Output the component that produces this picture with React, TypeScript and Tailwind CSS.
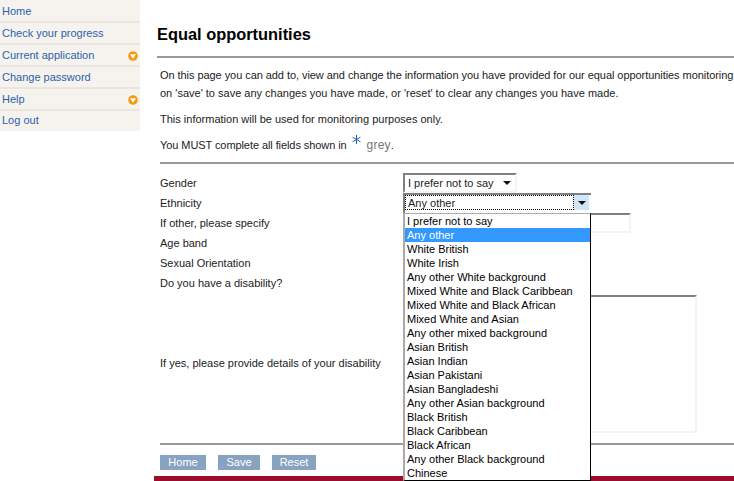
const navItems = [
  { label: "Home" },
  { label: "Check your progress" },
  { label: "Current application", arrow: true },
  { label: "Change password" },
  { label: "Help", arrow: true },
  { label: "Log out" },
];

const ethnicities = [
  "I prefer not to say",
  "Any other",
  "White British",
  "White Irish",
  "Any other White background",
  "Mixed White and Black Caribbean",
  "Mixed White and Black African",
  "Mixed White and Asian",
  "Any other mixed background",
  "Asian British",
  "Asian Indian",
  "Asian Pakistani",
  "Asian Bangladeshi",
  "Any other Asian background",
  "Black British",
  "Black Caribbean",
  "Black African",
  "Any other Black background",
  "Chinese",
];

const fieldBox = "border-2 border-t-[#808080] border-l-[#808080] border-r-[#f4f4f4] border-b-[#f4f4f4]";

function NavArrow() {
  return (
    <svg width="10" height="10" viewBox="0 0 10 10" className="shrink-0">
      <circle cx="5" cy="5" r="4.8" fill="#f59a12" />
      <path d="M2 3.2h6L5 7.8z" fill="#fff" />
    </svg>
  );
}

function Row({ label, children }: { label: string; children?: React.ReactNode }) {
  return (
    <div className="flex items-center h-5">
      <div className="w-[243px] shrink-0">{label}</div>
      {children}
    </div>
  );
}

export default function App() {
  return (
    <div className="relative flex h-[481px] w-[734px] overflow-hidden bg-white text-[11px] text-[#222] font-['Liberation_Sans',Arial,sans-serif]">
      {/* sidebar */}
      <nav className="w-[140px] shrink-0 self-start bg-[#f6f2ee] pt-px">
        {navItems.map((item, i) => (
          <div
            key={item.label}
            className={`flex items-center justify-between pl-0.5 pr-[2px] text-[#2a62ad] ${i < navItems.length - 1 ? "h-[22px] border-b-2 border-[#e9e5e1] pt-px" : "h-[20px] pb-[2px]"}`}
          >
            <span>{item.label}</span>
            {item.arrow && <NavArrow />}
          </div>
        ))}
      </nav>

      {/* main */}
      <main className="relative ml-[14px] flex min-w-0 flex-1 flex-col">
        <h1 className="ml-[3px] mt-[24px] h-[20px] text-[16.4px] leading-[20px] font-bold text-black whitespace-nowrap">
          Equal opportunities
        </h1>
        <div className="ml-[3px] mt-[12px] h-0.5 bg-[#999]" />

        <div className="ml-[6px] mt-[8px] whitespace-nowrap">
          <p className="leading-[18px] tracking-[-0.06px]">On this page you can add to, view and change the information you have provided for our equal opportunities monitoring</p>
          <p className="leading-[18px]">on 'save' to save any changes you have made, or 'reset' to clear any changes you have made.</p>
          <p className="mt-2 leading-[18px]">This information will be used for monitoring purposes only.</p>
          <p className="mt-2 flex h-[18px] items-center tracking-[-0.08px]">
            You MUST complete all fields shown in
            <svg width="9" height="9" viewBox="0 0 9 9" className="ml-[5px] mb-[12px]">
              <path d="M4.5 0v9M0.6 2.2l7.8 4.6M8.4 2.2L0.6 6.8" stroke="#1a5fb4" strokeWidth="1" fill="none" />
            </svg>
            <span className="ml-[6px] text-[12px] tracking-[0.2px] text-[#777]">grey</span>.
          </p>
        </div>
        <div className="ml-[6px] mt-[8px] h-0.5 bg-[#999]" />

        <div className="ml-[6px] mt-[9px] whitespace-nowrap">
          <Row label="Gender">
            <div className={`flex h-[20px] w-[114px] items-center justify-between pl-[3px] pr-[4px] ${fieldBox}`}>
              <span>I prefer not to say</span>
              <svg width="8" height="4" viewBox="0 0 8 4"><path d="M0 0h8L4 4z" fill="#111" /></svg>
            </div>
          </Row>
          <Row label="Ethnicity" />
          <Row label="If other, please specify">
            <div className={`h-[20px] w-[228px] ${fieldBox}`} />
          </Row>
          <Row label="Age band" />
          <Row label="Sexual Orientation" />
          <Row label="Do you have a disability?" />
          <div className="mt-[2px] flex h-[138px] items-center">
            <div className="mb-[2px] w-[243px] shrink-0">If yes, please provide details of your disability</div>
            <div className={`h-full w-[294px] ${fieldBox}`} />
          </div>
        </div>

        <div className="ml-[6px] mt-[10px] h-0.5 bg-[#999]" />
        <div className="ml-[6px] mt-[10px] flex gap-3">
          {["Home", "Save", "Reset"].map((b) => (
            <button key={b} className="flex h-[15px] w-[46px] items-center justify-center bg-[#87a3c1] text-[11px] text-white [&:nth-child(2)]:w-[42px] [&:nth-child(3)]:w-[44px]">
              {b}
            </button>
          ))}
        </div>
        <div className="mt-[6px] h-[5px] bg-[#9c0c2c]" />
      </main>

      {/* open ethnicity select */}
      <div className="absolute left-[403px] top-[193px] w-[188px]">
        <div className="flex h-[20px] border-t-2 border-l-2 border-[#808080] bg-white">
          <div className="h-[15px] flex-1 border border-dotted border-black pl-[2px] leading-[14px]">Any other</div>
          <div className="mr-[2px] flex h-[15px] w-[15px] items-center justify-center bg-[#cfe6f7]">
            <svg width="8" height="4" viewBox="0 0 8 4"><path d="M0 0h8L4 4z" fill="#111" /></svg>
          </div>
        </div>
        <ul className="h-[268px] overflow-hidden border border-black border-l-2 border-l-[#aaa] border-t-[#aaa] bg-white">
          {ethnicities.map((o, i) => (
            <li key={o} className={`h-[14px] pl-[2px] leading-[14px] whitespace-nowrap ${i === 1 ? "bg-[#3399ff] text-white" : "text-black"}`}>{o}</li>
          ))}
        </ul>
      </div>
    </div>
  );
}
